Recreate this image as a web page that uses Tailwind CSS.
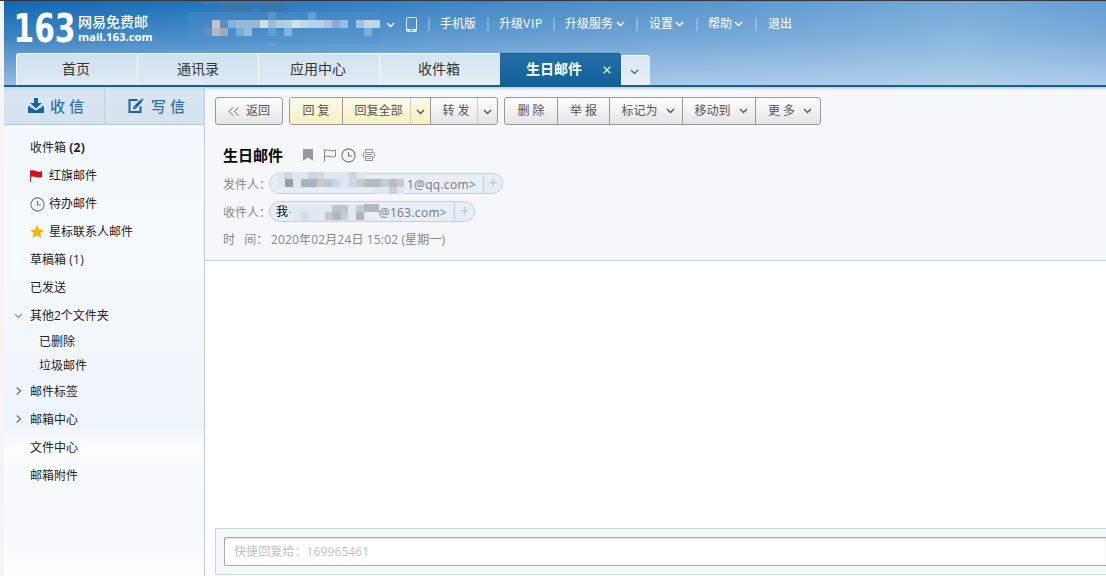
<!DOCTYPE html>
<html lang="zh-CN">
<head>
  <meta charset="UTF-8">
  <meta name="viewport" content="width=device-width, initial-scale=1.0">
  <title>生日邮件 - 网易免费邮</title>
  <script src="https://cdn.jsdelivr.net/npm/@tailwindcss/browser@4"></script>
</head>
<body class="h-screen overflow-hidden bg-[#f5f5f3] font-['Open_Sans','Noto_Sans_CJK_SC',sans-serif] text-xs text-[#222]">
  <svg class="hidden">
    <symbol id="down" viewBox="0 0 9 6"><path d="M1 1l3.5 3.5L8 1" fill="none" stroke="currentColor" stroke-width="1.4"/></symbol>
    <symbol id="clock" viewBox="0 0 15 15"><circle cx="7.5" cy="7.5" r="6.6" fill="none" stroke="currentColor" stroke-width="1.1"/><path d="M7.5 4v4H11" fill="none" stroke="currentColor" stroke-width="1.2"/></symbol>
  </svg>

  <div class="flex h-full flex-col border-t border-[#33373d] pl-1">
    <header class="flex h-[86px] shrink-0 flex-col border-b-2 border-[#0f6299] bg-[linear-gradient(to_bottom,rgba(205,225,243,0)_0%,rgba(205,225,243,.25)_45%,rgba(205,225,243,.7)_100%),linear-gradient(to_right,#1066b2_0%,#2476bd_22%,#4388c6_45%,#619cd1_72%,#74aad8_87%,#629cd2_100%)]">
      <div class="flex h-[52px]">
        <div class="flex w-[184px] shrink-0 text-white">
          <svg class="h-[52px] w-[75px]" fill="#fff">
            <text x="9.5" y="41" font-family="DejaVu Sans" font-weight="bold" font-size="39" textLength="62" lengthAdjust="spacingAndGlyphs">163</text>
          </svg>
          <div class="-ml-px pt-[13px]">
            <p class="h-[15px] text-sm leading-[15px] font-medium whitespace-nowrap">网易免费邮</p>
            <p class="h-[15px] text-[11.3px] leading-4 font-bold">mail.163.com</p>
          </div>
        </div>
        <!-- 账号（打码） -->
        <svg class="h-[52px] w-[194px] shrink-0" shape-rendering="crispEdges">
          <path d="M16 0h102v3H16z" fill="#4078ab"/>
          <path d="M32 3h32v8H32zM72 3h24v8H72z" fill="#3a76a8"/>
          <path d="M0 11h192v32H0z" fill="#4f92ca" opacity=".35"/>
          <path d="M80 11h8v8h-8z" fill="#5495cb"/><path d="M120 11h8v8h-8z" fill="#629fcf"/>
          <path d="M24 19h8v8h-8z" fill="#c2c3c8"/><path d="M32 19h8v8h-8z" fill="#5d8fb8"/><path d="M40 19h8v8h-8z" fill="#83b3dc"/><path d="M48 19h16v8H48z" fill="#94b9d9"/><path d="M64 19h8v8h-8z" fill="#9cb7d8"/>
          <path d="M72 19h8v8h-8z" fill="#cfdeef"/><path d="M80 19h8v8h-8z" fill="#a0bdd2"/><path d="M88 19h8v8h-8z" fill="#b0cce3"/><path d="M96 19h8v8h-8z" fill="#a9d1e8"/><path d="M104 19h8v8h-8z" fill="#d3e2ea"/><path d="M112 19h8v8h-8z" fill="#c2d8e3"/><path d="M120 19h8v8h-8z" fill="#b0d5ec"/><path d="M128 19h8v8h-8z" fill="#b7d1e8"/><path d="M136 19h8v8h-8z" fill="#afc2de"/><path d="M144 19h8v8h-8z" fill="#86aadb"/><path d="M152 19h8v8h-8z" fill="#9cbadb"/>
          <path d="M168 19h8v8h-8z" fill="#9dc5df"/><path d="M176 19h8v8h-8z" fill="#c8d5e3"/><path d="M184 19h8v8h-8z" fill="#bdd4ea"/>
          <path d="M16 27h8v8h-8z" fill="#6090bb"/><path d="M24 27h8v8h-8z" fill="#b0b9c2"/><path d="M32 27h8v8h-8z" fill="#9cacb9"/><path d="M48 27h8v8h-8z" fill="#79aed6"/><path d="M56 27h8v8h-8z" fill="#91bbd9"/><path d="M80 27h8v8h-8z" fill="#659fce"/><path d="M96 27h8v8h-8z" fill="#84b1d8"/><path d="M176 27h8v8h-8z" fill="#7daed5"/>
          <path d="M80 43h8v1h-8z" fill="#82b4d9"/>
        </svg>
        <div class="flex h-[46px] items-center text-white">
          <svg class="ml-1 mt-0.5 h-1.5 w-[9px]"><use href="#down"/></svg>
          <svg class="ml-[11px] h-[15px] w-[11px]" fill="none"><rect x=".5" y=".5" width="10" height="14" rx="1" stroke="#e3eef8"/><path d="M1 13h9" stroke="#e3eef8" stroke-width="2"/><path d="M4 13.500h3" stroke="#4e8ec6"/></svg>
          <nav class="ml-[11px] flex items-center">
            <a class="flex w-[59px] items-center"><i class="mr-[10px] h-[13px] w-0.5 bg-white/25"></i>手机版</a>
            <a class="flex w-[66px] items-center"><i class="mr-[10px] h-[13px] w-0.5 bg-white/25"></i>升级<span class="tracking-[.8px]">VIP</span></a>
            <a class="flex w-[83px] items-center"><i class="mr-[10px] h-[13px] w-0.5 bg-white/25"></i>升级服务<svg class="ml-[3px] h-1.5 w-[9px]"><use href="#down"/></svg></a>
            <a class="flex w-[60px] items-center"><i class="mr-[11px] h-[13px] w-0.5 bg-white/25"></i>设置<svg class="ml-[2px] h-1.5 w-[9px]"><use href="#down"/></svg></a>
            <a class="flex w-[59px] items-center"><i class="mr-[10px] h-[13px] w-0.5 bg-white/25"></i>帮助<svg class="ml-[2px] h-1.5 w-[9px]"><use href="#down"/></svg></a>
            <a class="flex items-center"><i class="mr-[11px] h-[13px] w-0.5 bg-white/25"></i>退出</a>
          </nav>
        </div>
      </div>
      <div class="ml-3 flex h-8 items-end text-sm text-[#333]">
        <a class="flex h-8 w-[121px] items-center justify-center rounded-tl-[3px] border-t border-l border-white/90 bg-linear-to-b from-[#cee0ef] to-[#dfeaf4] pr-0.5 pb-0.5">首页</a>
        <a class="flex h-8 w-[121px] items-center justify-center border-t border-l border-white/90 bg-linear-to-b from-[#cfe1ef] to-[#dfeaf4] pb-0.5">通讯录</a>
        <a class="flex h-8 w-[121px] items-center justify-center border-t border-l border-white/90 bg-linear-to-b from-[#d1e2f0] to-[#e1ecf5] pr-0.5 pb-0.5">应用中心</a>
        <a class="flex h-8 w-[121px] items-center justify-center border-t border-l border-white/90 bg-linear-to-b from-[#d5e4f1] to-[#e4eef6] pr-0.5 pb-0.5">收件箱</a>
        <a class="flex h-8 w-[121px] items-center rounded-tr-[3px] border-t border-[#0f5c94] bg-linear-to-b from-[#236fa9] to-[#0f6199] pb-0.5 pl-[26px] font-bold text-white">生日邮件<svg class="ml-[21px] mt-0.5 h-2 w-2" stroke="#d3e4f1" stroke-width="1.5"><path d="M.7.7l6.600 6.600M7.300.7L.7 7.300"/></svg></a>
        <a class="flex h-[30px] w-[29px] items-center justify-center rounded-tr-[3px] border-t border-white bg-linear-to-b from-[#dbe8f3] to-[#e8f0f7] pt-0.5 text-[#666]"><svg class="mr-0.5 h-1.5 w-[9px]"><use href="#down"/></svg></a>
      </div>
    </header>

    <div class="flex min-h-0 flex-1">
      <aside class="w-[201px] shrink-0 border-r border-[#b9cdd9] bg-[linear-gradient(to_bottom,#f1f8fd_0%,#f5fafe_35%,#f1f6fc_58%,#edf4f9_69%,#fbfdfe_74%,#f6fafd_88%,#fdfefe_100%)]">
        <div class="flex h-[38px] border-b border-[#b5cbdd] bg-linear-to-b from-[#cddce8] via-[#d9e6f1] via-15% to-[#d5e3ef] text-[15px] font-medium text-[#2d71a8]">
          <a class="flex w-[101px] items-center border-r border-[#c0d2e0] pl-6">
            <svg class="mr-1.5 h-[15px] w-4" fill="#17639d"><path d="M6 0h4v5h4L8 10.500 2 5h4z"/><path d="M2.500 7.500L0 9v5.500q0 .5.5.5h15q.5 0 .5-.5V9l-2.500-1.500v2.500h-2l-2 2h-3l-2-2h-2z"/></svg>
            收 信
          </a>
          <a class="flex items-center pl-[23px]">
            <svg class="mr-[7px] h-[15px] w-4" fill="none" stroke="#17639d" stroke-width="2"><path d="M9.500 2H1.500v12h11V8.500"/><path d="M7 9.200L13.300 2.700" stroke-width="2.800"/><path d="M13.600 1l1.400 1.400" stroke-width="1.800"/><path d="M5 11.200l.7-2.800 2.200 2.100z" fill="#17639d" stroke-width=".4"/></svg>
            写 信
          </a>
        </div>
        <ul class="pt-[9px]">
          <li class="flex h-7 items-center pl-[26px]">收件箱&nbsp;<b class="tracking-[.3px]">(2)</b></li>
          <li class="flex h-7 items-center pl-[26px]"><svg class="mr-[7px] h-3 w-3" fill="#d31313"><path d="M0 0h1v12H0z"/><path d="M0 1q3-1.500 6 0t6 0v6q-3 1-6 0t-6 0z"/></svg>红旗邮件</li>
          <li class="flex h-7 items-center pl-[26px]"><svg class="mr-1 h-[15px] w-[15px] text-[#777]"><use href="#clock"/></svg>待办邮件</li>
          <li class="flex h-7 items-center pl-[26px]"><svg class="-mt-0.5 mr-[5px] h-[13px] w-3.5" fill="#f9b406"><path d="M7 0l2 4.500 5 .5-3.700 3.200L11.400 13 7 10.500 2.600 13l1.100-4.800L0 5l5-.5z"/></svg>星标联系人邮件</li>
          <li class="flex h-7 items-center pl-[26px]">草稿箱&nbsp;<span class="tracking-[.3px]">(1)</span></li>
          <li class="flex h-7 items-center pl-[26px]">已发送</li>
          <li class="flex h-7 items-center pl-[10px]"><svg class="mr-[7px] h-1.5 w-[9px] text-[#999]"><use href="#down"/></svg>其他2个文件夹</li>
          <li class="flex h-6 items-center pl-[35px]">已删除</li>
          <li class="flex h-6 items-center pl-[35px]">垃圾邮件</li>
          <li class="flex h-7 items-center pl-3"><svg class="-mt-0.5 mr-2 h-2 w-1.5" fill="none" stroke="#777" stroke-width="1.4"><path d="M.7.5L4.500 4 .7 7.500"/></svg>邮件标签</li>
          <li class="flex h-7 items-center pl-3"><svg class="-mt-0.5 mr-2 h-2 w-1.5" fill="none" stroke="#777" stroke-width="1.4"><path d="M.7.5L4.500 4 .7 7.500"/></svg>邮箱中心</li>
          <li class="flex h-7 items-center pl-[26px]">文件中心</li>
          <li class="flex h-7 items-center pl-[26px]">邮箱附件</li>
        </ul>
      </aside>

      <main class="flex min-w-0 flex-1 flex-col bg-white">
        <div class="h-[3px] shrink-0 bg-linear-to-b from-[#c5ccd0] to-[#f1f3f6]"></div>
        <section class="h-[171px] shrink-0 border-b border-[#bfd2de] bg-[#f5f7fb] pt-[7px]">
          <div class="ml-[10px] flex gap-1.5 text-[#555]">
            <button class="flex h-7 w-[68px] items-center justify-center rounded-[3px] border border-[#999] bg-linear-to-b from-white to-[#e4e4e4]"><svg class="mr-[7px] h-[9px] w-[11px]" fill="none" stroke="#666"><path d="M5 .5l-4 4 4 4M10.500 .5l-4 4 4 4"/></svg>返回</button>
            <div class="flex h-7 w-[209px] overflow-hidden rounded-[3px] border border-[#999] bg-linear-to-b from-white to-[#e4e4e4]">
              <button class="w-[53px] border-r border-[#999] bg-linear-to-b from-[#fdfbe9] to-[#f7f0bd]">回 复</button>
              <button class="w-[67px] bg-linear-to-b from-[#fdfbe9] to-[#f7f0bd] pl-1">回复全部</button>
              <button class="flex w-[21px] items-center justify-center border-x border-l-[#ccc] border-r-[#999] bg-linear-to-b from-[#fdfbe9] to-[#f7f0bd] pt-0.5"><svg class="h-1.5 w-[9px]"><use href="#down"/></svg></button>
              <button class="w-[46px] pl-1">转 发</button>
              <button class="flex flex-1 items-center justify-center border-l border-[#ccc] pt-0.5"><svg class="h-1.5 w-[9px]"><use href="#down"/></svg></button>
            </div>
            <div class="flex h-7 w-[317px] rounded-[3px] border border-[#999] bg-linear-to-b from-white to-[#e4e4e4]">
              <button class="w-[53px] border-r border-[#999]">删 除</button>
              <button class="w-[52px] border-r border-[#999]">举 报</button>
              <button class="flex w-[73px] items-center justify-center border-r border-[#999] pl-1">标记为<svg class="ml-2 h-1.5 w-[9px]"><use href="#down"/></svg></button>
              <button class="flex w-[73px] items-center justify-center border-r border-[#999] pl-1">移动到<svg class="ml-2 h-1.5 w-[9px]"><use href="#down"/></svg></button>
              <button class="flex flex-1 items-center justify-center pl-1">更 多<svg class="ml-2 h-1.5 w-[9px]"><use href="#down"/></svg></button>
            </div>
          </div>

          <div class="ml-[18px] mt-4 flex h-7 items-center">
            <h1 class="text-[15px] font-bold text-black">生日邮件</h1>
            <svg class="ml-5 h-3 w-2.5" fill="#999"><path d="M0 0h10v12L5 8.500 0 12z"/></svg>
            <svg class="ml-[11px] h-[13px] w-3" fill="none" stroke="#888"><path d="M.5 0v13M.5 1.500q3-1 5.500 0t5.500-.5v6.500q-3 1-5.500 0t-5.500 .5"/></svg>
            <svg class="ml-[5px] h-[15px] w-[15px] text-[#777]"><use href="#clock"/></svg>
            <svg class="ml-[7px] h-3 w-3" fill="none" stroke="#999"><path d="M2.500 3.500v-3h7v3"/><rect x=".5" y="3.500" width="11" height="5" rx="1.200"/><path d="M2.500 5.500h7"/><rect x="2.500" y="7.500" width="7" height="4" fill="#f5f7fb"/><path d="M4 9.500h4"/></svg>
          </div>
          <div class="ml-[18px] flex h-7 items-center text-[#888]">
            <span class="w-[46px] pt-[3px] whitespace-nowrap">发件人：</span>
            <div class="relative flex h-[21px] w-[234px] items-center rounded-full border border-[#bcd2e2] bg-[#e6eff6]">
              <span class="flex-1 pt-[3px] pr-[7px] text-right tracking-[.3px] text-[#777]">1@qq.com&gt;</span>
              <i class="h-full w-[19px] border-l border-[#bcd2e2] text-center text-base leading-[18px] text-[#b3cadb] not-italic">+</i>
              <svg class="absolute -top-0.5 left-1.5 h-[23px] w-[130px]" shape-rendering="crispEdges">
                <path d="M2 0h88v16H2zM74 6h54v16H98V16H74z" fill="#dfe7ee"/>
                <path d="M8 0h8v7H8zM73 0h8v15h-8z" fill="#ced6df"/><path d="M32 0h8v7h-8z" fill="#cbd4df"/><path d="M40 0h8v7h-8z" fill="#d9d8d7"/>
                <path d="M9 7h8v8H9z" fill="#9a9ba4"/><path d="M25 7h16v8H25z" fill="#aab3bf"/><path d="M41 7h8v8h-8z" fill="#cec9c6"/><path d="M49 7h8v8h-8z" fill="#b9cbd9"/><path d="M57 7h8v8h-8z" fill="#c5dbed"/>
                <path d="M81 7h8v8h-8z" fill="#c7cacd"/><path d="M89 7h16v8H89z" fill="#b4b9c2"/><path d="M105 7h8v8h-8z" fill="#c7cdd4"/><path d="M113 7h8v8h-8z" fill="#bfbabf"/><path d="M121 7h7v8h-7z" fill="#c7cbd1"/><path d="M113 15h8v7h-8z" fill="#c8cfd8"/>
              </svg>
            </div>
          </div>
          <div class="ml-[18px] flex h-7 items-center text-[#888]">
            <span class="w-[46px] pt-[3px] whitespace-nowrap">收件人：</span>
            <div class="relative flex h-[21px] w-[206px] items-center rounded-full border border-[#bcd2e2] bg-[#e6eff6] pl-1.5">
              <span class="pt-0.5 text-black">我</span>
              <span class="flex-1 pt-[3px] pr-[7px] text-right tracking-[.3px] text-[#777]">@163.com&gt;</span>
              <i class="h-full w-5 border-l border-[#bcd2e2] text-center text-base leading-[18px] text-[#b3cadb] not-italic">+</i>
              <svg class="absolute top-0 left-[19px] h-[19px] w-[90px]" shape-rendering="crispEdges">
                <path d="M0 10h2v1H0z" fill="#888"/><path d="M4 3h74v16H4z" fill="#e1e9f0"/><path d="M12 10h8v8h-8z" fill="#d3dde6"/>
                <path d="M43 3h16v8H43z" fill="#bfc4ca"/><path d="M67 3h8v8h-8z" fill="#bfccd9"/><path d="M75 2h15v8H75z" fill="#b4b7bd"/>
                <path d="M36 10h8v8h-8z" fill="#c7c7ca"/><path d="M44 10h8v8h-8z" fill="#adb5be"/><path d="M52 10h7v8h-7z" fill="#c6cdd4"/><path d="M67 10h8v8h-8z" fill="#b5b3b8"/>
              </svg>
            </div>
          </div>
          <div class="ml-[18px] flex h-7 items-center pt-0.5 text-[#888]">
            <span class="w-12 whitespace-pre">时   间：</span>
            <span class="tracking-[.15px]">2020年02月24日 15:02 (星期一)</span>
          </div>
        </section>

        <footer class="mt-auto mb-px ml-[10px] h-[47px] rounded-l-xs border border-r-0 border-[#c9d7e2] bg-[#f5f7fb] py-2 pl-2">
          <div class="flex h-[29px] items-center rounded-l-xs border border-r-0 border-[#aaa] bg-white pl-[9px] tracking-[.1px] text-[#c2c2c2] shadow-[inset_0_1px_2px_#ddd]">快捷回复给：169965461</div>
        </footer>
      </main>
    </div>
  </div>
</body>
</html>
